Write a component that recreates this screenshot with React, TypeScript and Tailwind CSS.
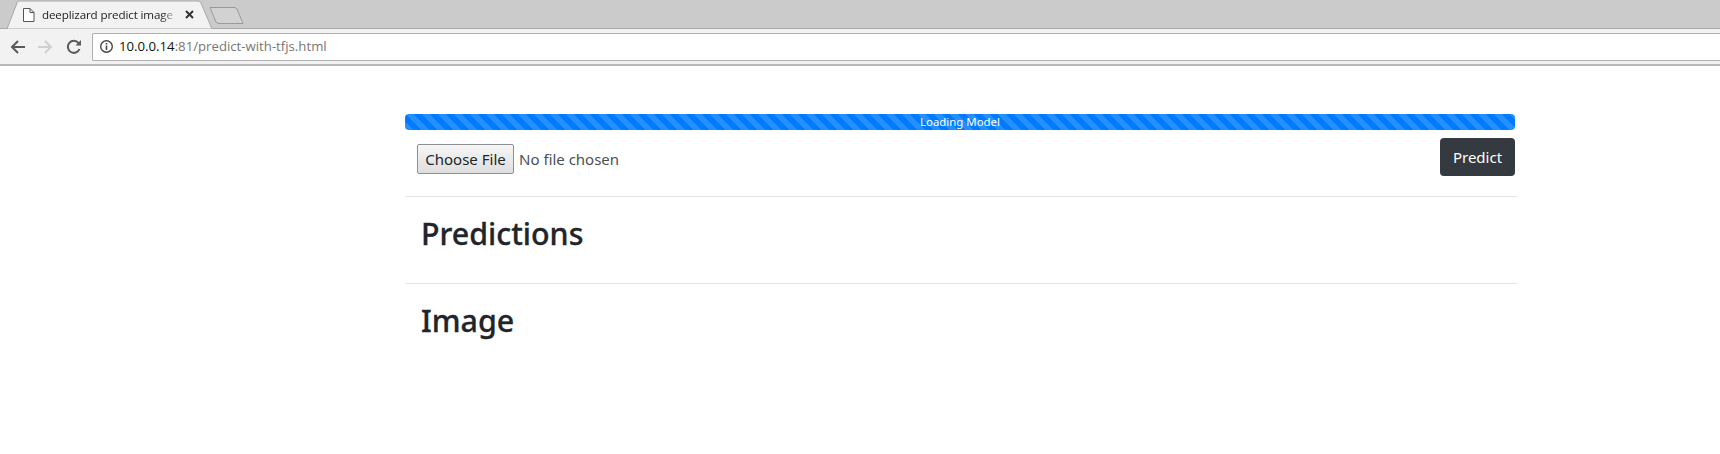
import React from "react";

const seg = { fontFamily: '"Noto Sans", "Open Sans", sans-serif' };

export default function App() {
  return (
    <div className="w-[1720px] h-[454px] bg-white overflow-hidden font-['Open_Sans',sans-serif]">
      {/* tab strip */}
      <div className="h-[29px] bg-[#cbcbcb] border-b border-[#a8a8a8] flex items-end relative">
        <svg width="250" height="29" viewBox="0 0 250 29" className="absolute left-0 top-0">
          <path d="M7 29 L17.5 1.5 Q18 1 20 1 L198 1 Q200 1 201 3 L212 29 Z" fill="#f2f2f2" stroke="#a8a8a8" />
          <path d="M210 7.5 H234 Q236 7.5 237 9 L243 23.5 H219 Q217 23.5 216 22 Z" fill="#d2d2d2" stroke="#9a9a9a" />
          <path d="M23.5 8.5 H30 L34 12.5 V21.5 H23.5 Z M30 8.5 V12.5 H34" fill="#fff" stroke="#555" strokeWidth="1" />
          <path d="M186 11 L193 18 M193 11 L186 18" stroke="#333" strokeWidth="2" />
        </svg>
        <span className="absolute left-[42px] top-[6px] w-[140px] whitespace-nowrap text-[11.6px] tracking-[-0.12px] leading-[18px] text-[#222] [mask-image:linear-gradient(90deg,#000_85%,transparent_98%)]">
          deeplizard predict image
        </span>
      </div>
      {/* toolbar */}
      <div className="h-[37px] bg-[#f2f2f2] border-b-2 border-[#b8b8b8] flex items-center pl-[9px]">
        <svg width="18" height="18" viewBox="0 0 18 18" className="mr-[9px]">
          <path d="M16 9 H3 M9 3 L3 9 L9 15" fill="none" stroke="#5a5a5a" strokeWidth="2" />
        </svg>
        <svg width="18" height="18" viewBox="0 0 18 18" className="mr-[11px]">
          <path d="M2 9 H15 M9 3 L15 9 L9 15" fill="none" stroke="#d0d0d0" strokeWidth="2" />
        </svg>
        <svg width="18" height="18" viewBox="0 0 18 18" className="mr-[9px]">
          <path d="M14.5 11 A6 6 0 1 1 13.5 5" fill="none" stroke="#5a5a5a" strokeWidth="2" />
          <path d="M10.5 7.5 H16 V2 Z" fill="#5a5a5a" />
        </svg>
        <div className="flex-1 h-[28px] bg-white border border-[#b0b0b0] border-r-0 rounded-l-[2px] flex items-center pl-[6px]">
          <svg width="15" height="15" viewBox="0 0 15 15" className="mr-[5px]">
            <circle cx="7.5" cy="7.5" r="5.8" fill="none" stroke="#444" strokeWidth="1.4" />
            <path d="M7.5 6.6 V11 M7.5 4 V5.4" stroke="#444" strokeWidth="1.6" />
          </svg>
          <span className="text-[13.2px] leading-none whitespace-nowrap text-[#777]">
            <span className="text-[#111]">10.0.0.14</span>:81/predict-with-tfjs.html
          </span>
        </div>
      </div>
      {/* page */}
      <div className="ml-[405px] w-[1112px] pt-[48px]" style={seg}>
        <div className="w-[1110px] h-[16px] rounded-[4px] bg-[#007bff] bg-[linear-gradient(45deg,rgba(255,255,255,0.15)_25%,transparent_25%,transparent_50%,rgba(255,255,255,0.15)_50%,rgba(255,255,255,0.15)_75%,transparent_75%,transparent)] bg-[length:16px_16px] flex items-center justify-center text-white text-[11.4px] leading-none">
          Loading Model
        </div>
        <div className="w-[1110px] flex justify-between items-start pt-[8px] pl-[12px]">
          <div className="flex items-center pt-[6px]">
            <button className="h-[30px] w-[97px] bg-[linear-gradient(#f6f6f6,#dedede)] border border-[#8f8f8f] rounded-[2px] text-[15px] leading-none text-[#212529] whitespace-nowrap">
              Choose File
            </button>
            <span className="ml-[5px] text-[15px] text-[#495057]">No file chosen</span>
          </div>
          <button className="h-[38px] w-[75px] bg-[#343a40] rounded-[4px] text-white text-[15px]">Predict</button>
        </div>
        <div className="mt-[20px] border-t border-[#e5e5e5] h-[87px] pl-[16px] pt-[18px]">
          <h1 className="text-[30.4px] leading-[38px] font-medium text-[#212529] [-webkit-text-stroke:0.3px_#212529]">Predictions</h1>
        </div>
        <div className="border-t border-[#e5e5e5] pl-[16px] pt-[18px]">
          <h1 className="text-[30.4px] leading-[38px] font-medium text-[#212529] [-webkit-text-stroke:0.3px_#212529]">Image</h1>
        </div>
      </div>
    </div>
  );
}
